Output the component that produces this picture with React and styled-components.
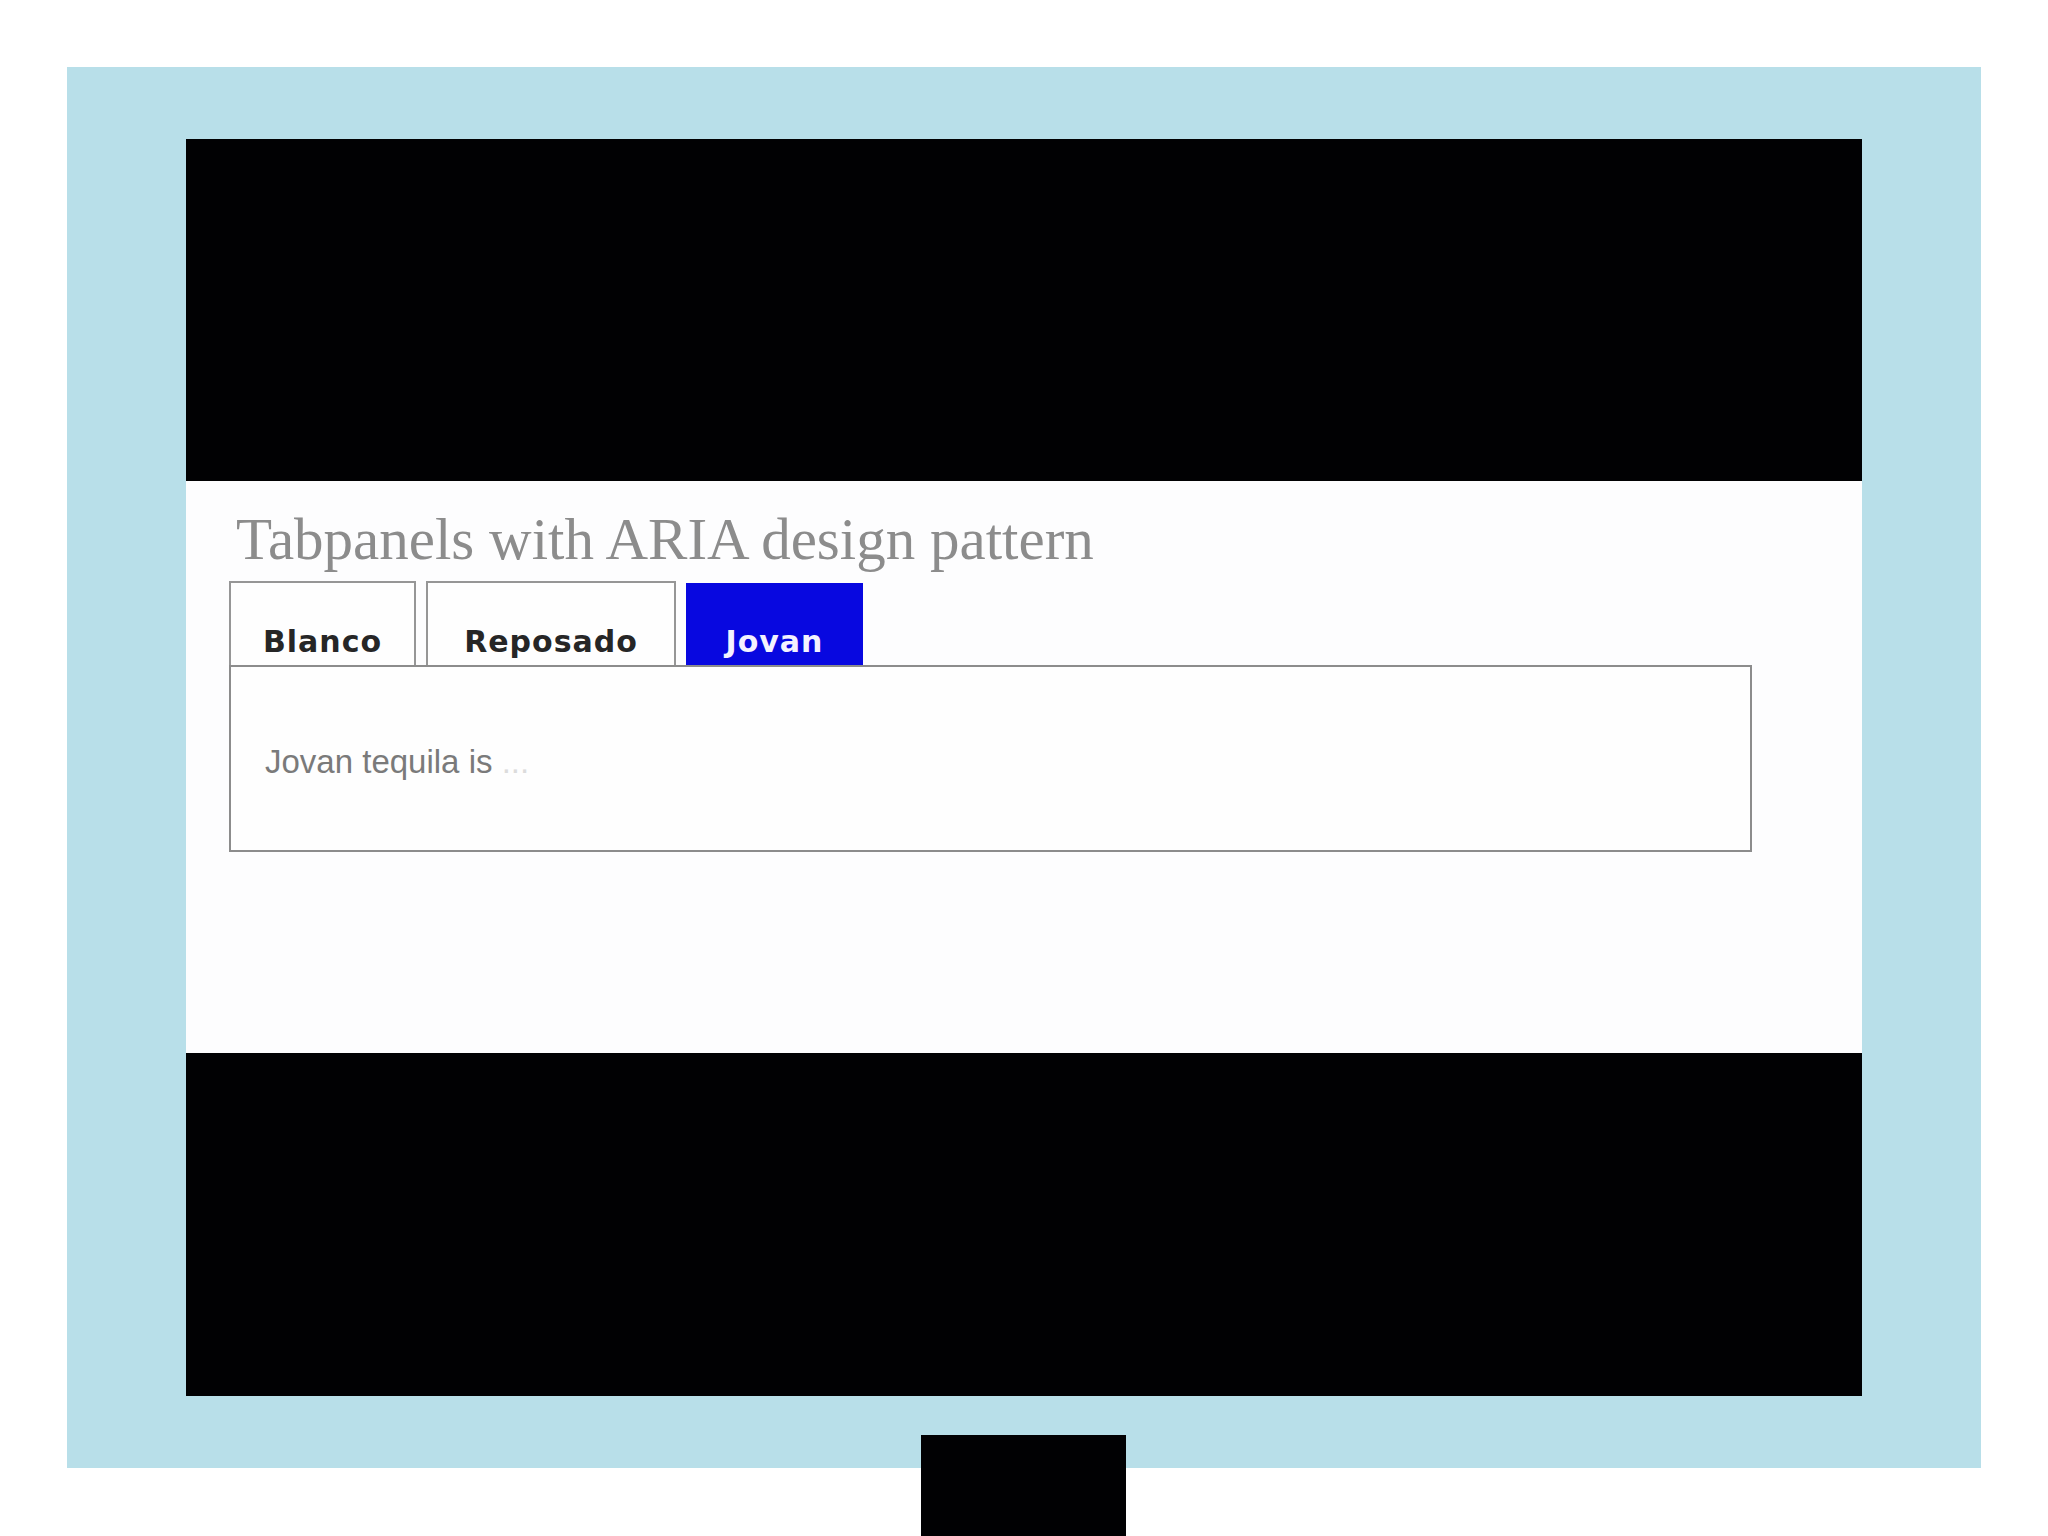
import React from "react";
import styled, { createGlobalStyle } from "styled-components";

const GlobalStyle = createGlobalStyle`
  html, body {
    margin: 0;
    padding: 0;
    background: #ffffff;
    font-family: "Liberation Sans", Arial, sans-serif;
  }
`;

const Page = styled.div`
  position: relative;
  height: 1536px;
  padding: 67px 0 0 67px;
  box-sizing: border-box;
  overflow: hidden;
`;

const Frame = styled.div`
  width: 1914px;
  height: 1401px;
  box-sizing: border-box;
  padding: 72px 119px;
  background: #b8dfe9;
`;

const Screen = styled.div`
  display: flex;
  flex-direction: column;
  height: 100%;
`;

const Band = styled.div`
  height: ${(p) => p.h}px;
  background: #010103;
`;

const Slide = styled.div`
  height: 572px;
  box-sizing: border-box;
  padding: 26px 110px 0 43px;
  background: #fdfdfe;
`;

const Title = styled.h1`
  margin: 0 0 10px 7px;
  font-family: "Liberation Serif", "Times New Roman", serif;
  font-weight: normal;
  font-size: 59px;
  line-height: 64px;
  color: #8c8c8c;
`;

const TabList = styled.div`
  display: flex;
  align-items: flex-end;
  gap: 10px;
`;

const Tab = styled.div`
  width: ${(p) => p.w}px;
  height: ${(p) => (p.active ? 82 : 84)}px;
  box-sizing: border-box;
  padding-top: ${(p) => (p.active ? 39 : 41)}px;
  border: 2px solid ${(p) => (p.active ? "#0808e0" : "#969696")};
  border-bottom: none;
  background: ${(p) => (p.active ? "#0808e0" : "#fefefe")};
  color: ${(p) => (p.active ? "#f4f2ff" : "#262626")};
  font-family: "DejaVu Sans", Verdana, sans-serif;
  font-weight: bold;
  font-size: 30px;
  line-height: 35px;
  letter-spacing: 1px;
  text-align: center;
`;

const Panel = styled.div`
  height: 187px;
  box-sizing: border-box;
  padding: 76px 0 0 34px;
  border: 2px solid #8c8c8c;
  background: #fefefe;
`;

const PanelText = styled.p`
  margin: 0;
  font-size: 33px;
  line-height: 38px;
  color: #7a7a7a;
`;

const Faint = styled.span`
  color: #dcdcdc;
`;

const Stub = styled.div`
  position: absolute;
  left: 921px;
  top: 1435px;
  width: 205px;
  height: 101px;
  background: #010103;
`;

const tabs = [
  { label: "Blanco", w: 187 },
  { label: "Reposado", w: 250 },
  { label: "Jovan", w: 177, active: true },
];

export default function App() {
  return (
    <Page>
      <GlobalStyle />
      <Frame>
        <Screen>
          <Band h={342} />
          <Slide>
            <Title>Tabpanels with ARIA design pattern</Title>
            <TabList>
              {tabs.map((t) => (
                <Tab key={t.label} w={t.w} active={t.active}>
                  {t.label}
                </Tab>
              ))}
            </TabList>
            <Panel>
              <PanelText>
                Jovan tequila is <Faint>...</Faint>
              </PanelText>
            </Panel>
          </Slide>
          <Band h={343} />
        </Screen>
      </Frame>
      <Stub />
    </Page>
  );
}
